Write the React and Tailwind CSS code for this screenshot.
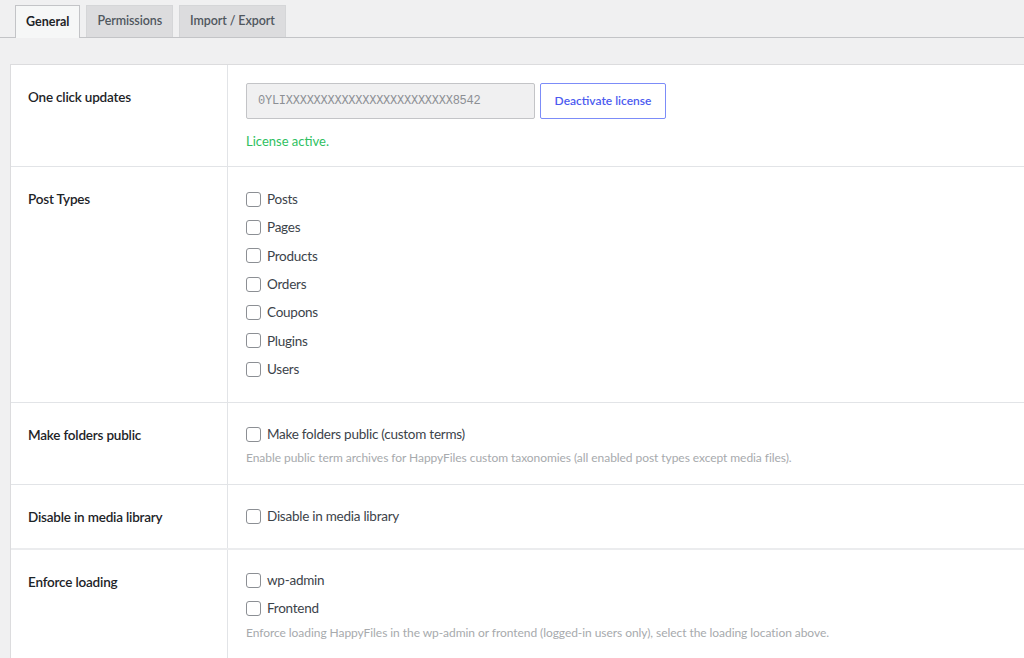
const font = "font-['Segoe_UI','Lato','Open_Sans',sans-serif]";

const postTypes = ["Posts", "Pages", "Products", "Orders", "Coupons", "Plugins", "Users"];

function Check({ label }) {
  return (
    <label className="flex h-[28.33px] items-center gap-[6px] text-[13.5px] tracking-[-0.25px] text-[#3c434a]">
      <span className="h-[15px] w-[15px] shrink-0 rounded-[3px] border border-[#8c8f94] bg-white" />
      <span>{label}</span>
    </label>
  );
}

function Row({ label, children, className = "" }) {
  return (
    <div className={`flex border-b border-[#e2e4e7] ${className}`}>
      <div className="w-[217px] shrink-0 border-r border-[#e2e4e7] pl-[17px] pt-[22px] text-[13.5px] font-semibold tracking-[-0.2px] text-[#1d2327]">
        {label}
      </div>
      <div className="flex-1 pl-[18px]">{children}</div>
    </div>
  );
}

export default function App() {
  return (
    <div className={`h-[658px] w-[1024px] overflow-hidden bg-[#f0f0f1] ${font}`}>
      <div className="flex items-end gap-[6px] border-b border-[#c3c4c7] pl-[15px] pt-[5px]">
        <div className="-mb-px flex h-[33px] items-center border border-b-0 border-[#c3c4c7] bg-[#f6f7f7] px-[10px] text-[12.5px] font-bold text-[#1d2327]">
          General
        </div>
        <div className="flex h-[32px] items-center border border-b-0 border-[#d5d6d8] bg-[#dcdcde] px-[10px] text-[12.5px] font-semibold tracking-[-0.1px] text-[#50575e]">
          Permissions
        </div>
        <div className="flex h-[32px] items-center border border-b-0 border-[#d5d6d8] bg-[#dcdcde] px-[10px] text-[12.5px] font-semibold tracking-[-0.1px] text-[#50575e]">
          Import / Export
        </div>
      </div>

      <div className="ml-[10px] mr-[-20px] mt-[26px] border border-[#dcdcde] bg-white">
        <Row label="One click updates" className="h-[102px]">
          <div className="flex gap-[5px] pt-[18px]">
            <div className="flex h-[36px] w-[289px] items-center rounded-[2px] border border-[#c3c4c7] bg-[#f0f0f1] pl-[11px] font-['Liberation_Mono',monospace] text-[12px] tracking-[-0.25px] text-[#8c8f94]">
              0YLIXXXXXXXXXXXXXXXXXXXXXXXX8542
            </div>
            <button
              type="button"
              className="h-[36px] w-[126px] rounded-[2px] border border-[#7c8cf8] bg-white text-[12px] font-semibold text-[#4c5bf0]"
            >
              Deactivate license
            </button>
          </div>
          <p className="mt-[13px] text-[13px] text-[#2fbf5f]">License active.</p>
        </Row>

        <Row label="Post Types" className="h-[236px]">
          <div className="pt-[18px]">
            {postTypes.map((t) => (
              <Check key={t} label={t} />
            ))}
          </div>
        </Row>

        <Row label="Make folders public" className="h-[82px]">
          <div className="pt-[17px]">
            <Check label="Make folders public (custom terms)" />
            <p className="mt-[1px] text-[12px] tracking-[-0.06px] text-[#a7aaad]">
              Enable public term archives for HappyFiles custom taxonomies (all enabled post types except media files).
            </p>
          </div>
        </Row>

        <Row label="Disable in media library" className="h-[65px] border-b-2 border-b-[#ebecee]">
          <div className="pt-[17px]">
            <Check label="Disable in media library" />
          </div>
        </Row>

        <Row label="Enforce loading" className="h-[120px] border-b-0">
          <div className="pt-[16px]">
            <Check label="wp-admin" />
            <Check label="Frontend" />
            <p className="mt-[1px] text-[12px] tracking-[-0.06px] text-[#a7aaad]">
              Enforce loading HappyFiles in the wp-admin or frontend (logged-in users only), select the loading location above.
            </p>
          </div>
        </Row>
      </div>
    </div>
  );
}
